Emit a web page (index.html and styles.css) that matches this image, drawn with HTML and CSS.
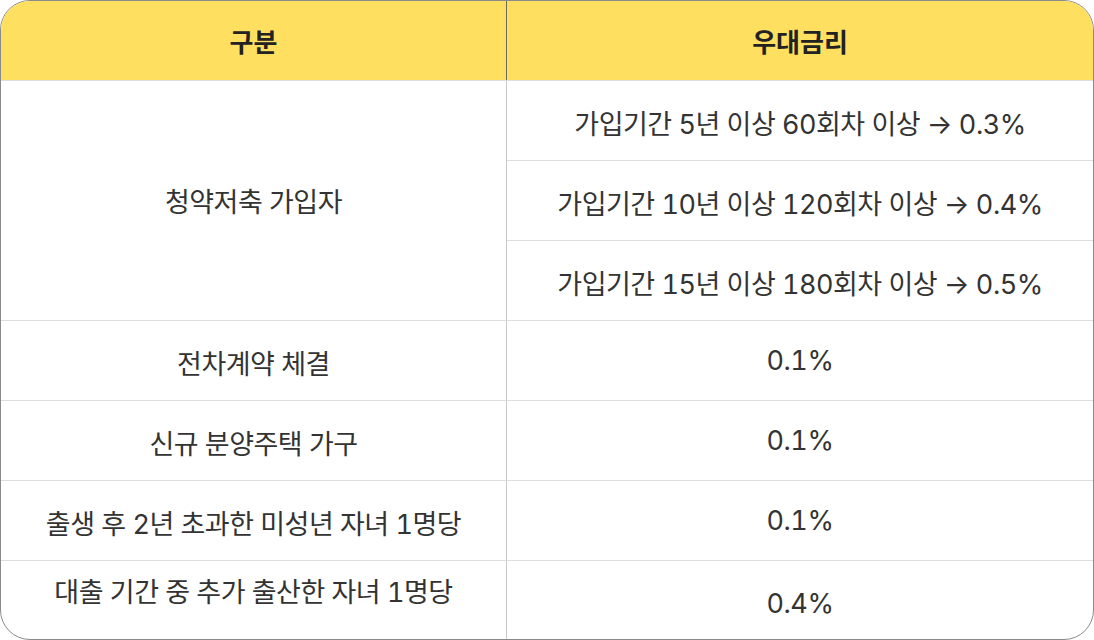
FILE: index.html
```html
<!DOCTYPE html>
<html lang="ko">
<head>
<meta charset="utf-8">
<link rel="stylesheet" href="styles.css">
</head>
<body>
<div class="table">
  <div class="th th-left">구분</div>
  <div class="th">우대금리</div>

  <div class="td td-left span3">청약저축 가입자</div>
  <div class="td sub">가입기간 5년 이상 60회차 이상 → 0.3%</div>
  <div class="td sub">가입기간 10년 이상 120회차 이상 → 0.4%</div>
  <div class="td sub">가입기간 15년 이상 180회차 이상 → 0.5%</div>

  <div class="td td-left">전차계약 체결</div>
  <div class="td">0.1%</div>

  <div class="td td-left">신규 분양주택 가구</div>
  <div class="td">0.1%</div>

  <div class="td td-left">출생 후 2년 초과한 미성년 자녀 1명당</div>
  <div class="td">0.1%</div>

  <div class="td td-left last-left">대출 기간 중 추가 출산한 자녀 1명당</div>
  <div class="td last-right">0.4%</div>
</div>
</body>
</html>
```
FILE: styles.css
```css
* { box-sizing: border-box; }
html, body { margin: 0; padding: 0; background: #ffffff; }
body {
  font-family: "Inter", "Noto Sans CJK KR", "Noto Sans", sans-serif;
  color: #333333;
}
.table {
  width: 1094px;
  height: 640px;
  border: 1px solid #8a8a8a;
  border-radius: 30px;
  overflow: hidden;
  display: grid;
  grid-template-columns: 506px 1fr;
  grid-template-rows: 79px repeat(6, 80px) 79px;
}
.th {
  background: #ffdf60;
  display: flex;
  align-items: center;
  justify-content: center;
  font-size: 26px;
  font-weight: 700;
  color: #222222;
}
.th-left { border-right: 1px solid #6b6b5a; }
.td {
  display: flex;
  align-items: center;
  justify-content: center;
  font-size: 27px;
  font-weight: 400;
  color: #333333;
  border-top: 1px solid #dedede;
  letter-spacing: -0.5px;
  font-feature-settings: "tnum";
}
.sub { padding-top: 4px; }
.td-left { border-right: 1px solid #c8c8c8; padding-top: 4px; }
.span3 { grid-row: span 3; padding-top: 0; }
.last-left { padding-top: 0; padding-bottom: 20px; }
.last-right { padding-top: 6px; }
```
